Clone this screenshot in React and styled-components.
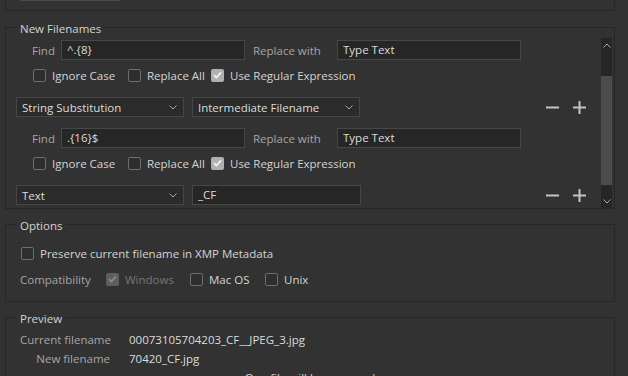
import React from 'react';
import styled, { createGlobalStyle } from 'styled-components';

const GlobalStyle = createGlobalStyle`
  body {
    margin: 0;
    background: #323232;
    font-family: "Open Sans", "Noto Sans", sans-serif;
    font-size: 11.5px;
    color: #d4d4d4;
    overflow: hidden;
  }
`;

const Dialog = styled.div`
  width: 628px;
  height: 376px;
  overflow: hidden;
  box-sizing: border-box;
  padding: 0 13px 0 5px;
`;

const TopPanel = styled.div`
  height: 10px;
  border: 1px solid #262626;
  border-top: none;
`;

const Stub = styled.div`
  width: 100px;
  height: 1px;
  margin-left: 14px;
  background: #4a4a4a;
`;

const Group = styled.fieldset`
  margin: ${p => p.$top}px 0 0;
  padding: 0;
  min-width: 0;
  border: 1px solid #262626;
`;

const Legend = styled.legend`
  margin-left: 10px;
  padding: 4px 4px 0;
  line-height: 16px;
  color: #d2d2d2;
`;

const ScrollArea = styled.div`
  display: flex;
  height: 170px;
  margin-top: 1px;
  padding: 0 2px 0 10px;
`;

const Rules = styled.div`
  flex: 1;
  overflow: hidden;
  padding-top: 2px;
`;

const FindRow = styled.div`
  display: flex;
  align-items: center;
  height: 20px;
  margin-top: ${p => p.$top || 0}px;
  padding-left: 16px;
`;

const Label = styled.span`
  width: ${p => p.$w}px;
  margin-left: ${p => p.$ml || 0}px;
  color: #a6a6a6;
  white-space: nowrap;
`;

const TextBox = styled.div`
  box-sizing: border-box;
  width: ${p => p.$w}px;
  height: 20px;
  padding-left: 5px;
  line-height: 18px;
  background: #262626;
  border: 1px solid #474747;
  color: #dcdcdc;
  white-space: nowrap;
`;

const CheckRow = styled.div`
  display: flex;
  align-items: center;
  height: 14px;
  margin-top: ${p => p.$top || 0}px;
  padding-left: ${p => p.$pl || 0}px;
`;

const CheckItem = styled.label`
  display: flex;
  align-items: center;
  gap: 6px;
  width: ${p => (p.$w ? `${p.$w}px` : 'auto')};
  color: ${p => (p.$disabled ? '#777777' : '#d4d4d4')};
  white-space: nowrap;
`;

const Box = styled.span`
  box-sizing: border-box;
  width: 13px;
  height: 13px;
  border-radius: 2px;
  border: 1px solid ${p => (p.$checked ? 'transparent' : '#6e6e6e')};
  background: ${p => (p.$checked ? (p.$disabled ? '#5e5e5e' : '#b0b0b0') : '#2e2e2e')};
  display: flex;
  align-items: center;
  justify-content: center;
  flex: none;
`;

const SelectRow = styled.div`
  display: flex;
  align-items: center;
  gap: 8px;
  height: 20px;
  margin-top: ${p => p.$top || 0}px;
  padding-right: 15px;
`;

const Select = styled.div`
  box-sizing: border-box;
  display: flex;
  align-items: center;
  justify-content: space-between;
  width: 168px;
  height: 20px;
  padding: 0 6px 0 5px;
  background: #2b2b2b;
  border: 1px solid #474747;
  color: #dcdcdc;
  white-space: nowrap;
`;

const Tools = styled.div`
  display: flex;
  align-items: center;
  gap: 14px;
  margin-left: auto;
`;

const Scrollbar = styled.div`
  display: flex;
  flex-direction: column;
  width: 11px;
  background: #262626;
`;

const Arrow = styled.div`
  height: 14px;
  display: flex;
  align-items: center;
  justify-content: center;
`;

const Track = styled.div`
  flex: 1;
  padding-top: 24px;
`;

const Thumb = styled.div`
  height: 109px;
  background: #4c4c4c;
`;

const OptionsBody = styled.div`
  padding: 12px 0 15px 14px;
`;

const PreviewBody = styled.div`
  padding: 5px 0 20px 14px;
`;

const NameGrid = styled.div`
  display: grid;
  grid-template-columns: 90px auto;
  column-gap: 19px;
  row-gap: 3px;
  line-height: 16px;
`;

const GridLabel = styled.span`
  text-align: right;
  color: #a6a6a6;
  white-space: nowrap;
`;

const Value = styled.span`
  color: #dcdcdc;
`;

const Note = styled.div`
  margin-top: 3px;
  line-height: 16px;
  text-align: center;
  padding-right: 14px;
  color: #d4d4d4;
`;

function Check({ checked, disabled, children, w }) {
  return (
    <CheckItem $w={w} $disabled={disabled}>
      <Box $checked={checked} $disabled={disabled}>
        {checked && (
          <svg width="9" height="8" viewBox="0 0 9 8">
            <path d="M1 4.2 L3.4 6.5 L8 1.3" fill="none" stroke={disabled ? '#8a8a8a' : '#f2f2f2'} strokeWidth="1.8" />
          </svg>
        )}
      </Box>
      {children}
    </CheckItem>
  );
}

function Chevron({ up }) {
  return (
    <svg width="8" height="5" viewBox="0 0 8 5">
      <path d={up ? 'M0.5 4.5 L4 1 L7.5 4.5' : 'M0.5 0.5 L4 4 L7.5 0.5'} fill="none" stroke="#a8a8a8" strokeWidth="1" />
    </svg>
  );
}

function PlusMinus() {
  return (
    <Tools>
      <svg width="13" height="13" viewBox="0 0 13 13">
        <path d="M0 6.5 H13" stroke="#c4c4c4" strokeWidth="2" />
      </svg>
      <svg width="13" height="13" viewBox="0 0 13 13">
        <path d="M0 6.5 H13 M6.5 0 V13" stroke="#c4c4c4" strokeWidth="2" />
      </svg>
    </Tools>
  );
}

function Rule({ find, top }) {
  return (
    <>
      <FindRow $top={top}>
        <Label $w={29}>Find</Label>
        <TextBox $w={184}>{find}</TextBox>
        <Label $w={84} $ml={8}>Replace with</Label>
        <TextBox $w={184}>Type Text</TextBox>
      </FindRow>
      <CheckRow $top={8} $pl={17}>
        <Check w={95}>Ignore Case</Check>
        <Check w={83}>Replace All</Check>
        <Check checked>Use Regular Expression</Check>
      </CheckRow>
    </>
  );
}

export default function App() {
  return (
    <Dialog>
      <GlobalStyle />
      <TopPanel>
        <Stub />
      </TopPanel>

      <Group $top={6}>
        <Legend>New Filenames</Legend>
        <ScrollArea>
          <Rules>
            <Rule find="^.{8}" />
            <SelectRow $top={15}>
              <Select>String Substitution<Chevron /></Select>
              <Select>Intermediate Filename<Chevron /></Select>
              <PlusMinus />
            </SelectRow>
            <Rule find=".{16}$" top={11} />
            <SelectRow $top={15}>
              <Select>Text<Chevron /></Select>
              <TextBox $w={169}>_CF</TextBox>
              <PlusMinus />
            </SelectRow>
          </Rules>
          <Scrollbar>
            <Arrow><Chevron up /></Arrow>
            <Track><Thumb /></Track>
            <Arrow><Chevron /></Arrow>
          </Scrollbar>
        </ScrollArea>
      </Group>

      <Group $top={5}>
        <Legend>Options</Legend>
        <OptionsBody>
          <CheckRow $pl={1}>
            <Check>Preserve current filename in XMP Metadata</Check>
          </CheckRow>
          <CheckRow $top={12}>
            <Label $w={86}>Compatibility</Label>
            <Check w={84} checked disabled>Windows</Check>
            <Check w={75}>Mac OS</Check>
            <Check>Unix</Check>
          </CheckRow>
        </OptionsBody>
      </Group>

      <Group $top={5}>
        <Legend>Preview</Legend>
        <PreviewBody>
          <NameGrid>
            <GridLabel>Current filename</GridLabel>
            <Value>00073105704203_CF__JPEG_3.jpg</Value>
            <GridLabel>New filename</GridLabel>
            <Value>70420_CF.jpg</Value>
          </NameGrid>
          <Note>One file will be renamed</Note>
        </PreviewBody>
      </Group>
    </Dialog>
  );
}
